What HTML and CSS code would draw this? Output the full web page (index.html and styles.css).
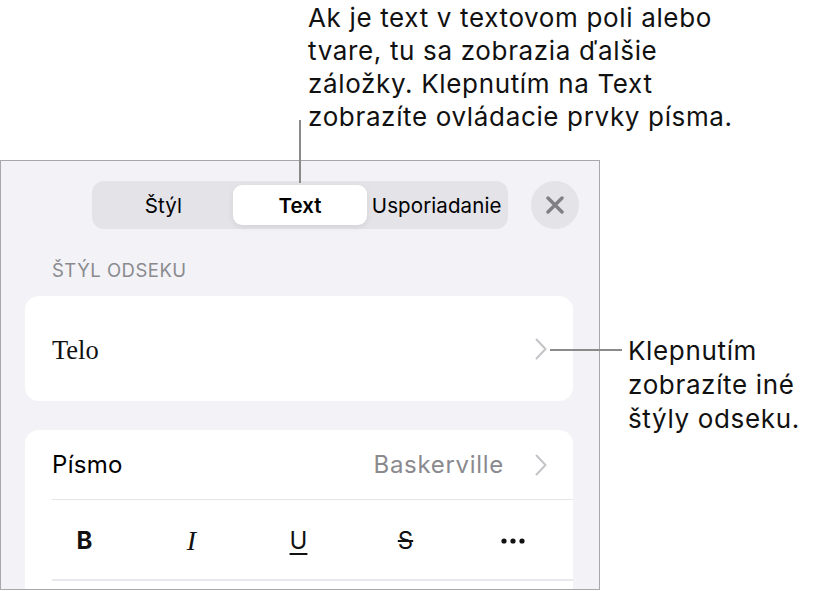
FILE: index.html
```html
<!DOCTYPE html>
<html lang="sk">
<head>
<meta charset="utf-8">
<title>Text</title>
<link rel="stylesheet" href="styles.css">
</head>
<body>
<div class="stage">
  <div class="callout callout-top">Ak je text v textovom poli alebo<br>tvare, tu sa zobrazia ďalšie<br>záložky. Klepnutím na Text<br>zobrazíte ovládacie prvky písma.</div>
  <div class="leader leader-top"></div>
  <div class="panel">
    <div class="header">
      <div class="segmented">
        <div class="seg">Štýl</div>
        <div class="seg seg-active">Text</div>
        <div class="seg">Usporiadanie</div>
      </div>
      <div class="close">
        <svg width="18" height="18" viewBox="0 0 18 18"><path d="M2 2 L16 16 M16 2 L2 16" stroke="#7f7f84" stroke-width="3.4" stroke-linecap="round" fill="none"/></svg>
      </div>
    </div>
    <div class="section-label">ŠTÝL ODSEKU</div>
    <div class="card card-style">
      <span class="telo">Telo</span>
      <svg class="chev" width="12" height="22" viewBox="0 0 12 22"><path d="M1.5 1.5 L10.5 11 L1.5 20.5" stroke="#c4c4c8" stroke-width="2" fill="none" stroke-linecap="round" stroke-linejoin="round"/></svg>
    </div>
    <div class="card card-font">
      <div class="row row-font">
        <span class="row-title">Písmo</span>
        <span class="row-value">Baskerville</span>
        <svg class="chev" width="12" height="22" viewBox="0 0 12 22"><path d="M1.5 1.5 L10.5 11 L1.5 20.5" stroke="#c4c4c8" stroke-width="2" fill="none" stroke-linecap="round" stroke-linejoin="round"/></svg>
      </div>
      <div class="row row-styles">
        <span class="ico ico-b">B</span>
        <span class="ico ico-i">I</span>
        <span class="ico ico-u">U</span>
        <span class="ico ico-s">S</span>
        <span class="ico ico-more"><svg width="24" height="6" viewBox="0 0 24 6"><circle cx="3" cy="3" r="2.6" fill="#111"/><circle cx="12" cy="3" r="2.6" fill="#111"/><circle cx="21" cy="3" r="2.6" fill="#111"/></svg></span>
      </div>
      <div class="row row-next"></div>
    </div>
  </div>
  <div class="leader leader-right"></div>
  <div class="callout callout-right">Klepnutím<br>zobrazíte iné<br>štýly odseku.</div>
</div>
</body>
</html>
```

FILE: styles.css
```css
* { box-sizing: border-box; }
html, body { margin: 0; padding: 0; background: #ffffff; }
body { font-family: Inter, Roboto, "Liberation Sans", sans-serif; color: #000; }

.stage {
  position: relative;
  width: 819px;
  height: 591px;
  overflow: hidden;
  padding-top: 160px;
}

.callout {
  position: absolute;
  font-family: Inter, Roboto, "Liberation Sans", sans-serif;
  font-size: 26px;
  line-height: 33px;
  color: #111;
  letter-spacing: 0.65px;
}
.callout-top { left: 308px; top: 1px; }
.callout-right { left: 628px; top: 334px; line-height: 34px; }

.leader { position: absolute; background: #8a8a8a; }
.leader-top { left: 299px; top: 120px; width: 2px; height: 63px; }
.leader-right { left: 550px; top: 349px; width: 72px; height: 2px; }

.panel {
  width: 600px;
  height: 430px;
  background: #f2f2f7;
  border: 1px solid #a8a8ac;
  overflow: hidden;
}

.header {
  display: flex;
  align-items: center;
  gap: 23px;
  padding: 20px 0 0 91px;
}
.segmented {
  display: flex;
  width: 416px;
  height: 48px;
  padding: 4px;
  border-radius: 12px;
  background: #e3e3e8;
}
.seg {
  flex: 1;
  display: flex;
  align-items: center;
  justify-content: center;
  font-size: 20.5px;
  color: #000;
  border-radius: 9px;
  white-space: nowrap;
  letter-spacing: 0.1px;
}
.seg-active {
  background: #ffffff;
  font-weight: 600;
  margin: 0 2px;
  box-shadow: 0 2px 6px rgba(0,0,0,0.08);
}
.close {
  width: 48px;
  height: 48px;
  border-radius: 50%;
  background: #e3e3e8;
  display: flex;
  align-items: center;
  justify-content: center;
}

.section-label {
  margin: 30px 0 0 51px;
  font-size: 18.5px;
  line-height: 22px;
  color: #8a8a8e;
  letter-spacing: 0.5px;
}

.card {
  margin-left: 24px;
  width: 548px;
  background: #ffffff;
  border-radius: 14px;
}
.card-style {
  margin-top: 15px;
  height: 105px;
  display: flex;
  align-items: center;
  justify-content: space-between;
  padding: 0 26px 0 27px;
}
.telo {
  font-family: "Liberation Serif", "DejaVu Serif", serif;
  font-size: 26.5px;
  color: #111;
  padding-top: 3px;
}

.card-font {
  margin-top: 29px;
  height: 200px;
}
.row { margin-left: 27px; }
.row-font {
  height: 70px;
  display: flex;
  align-items: center;
  padding-right: 26px;
  border-bottom: 1px solid #e6e6ea;
}
.row-title { font-size: 24px; flex: 1; letter-spacing: 0.3px; }
.row-value { font-size: 24px; color: #8a8a8e; margin-right: 31px; letter-spacing: 0.7px; }

.row-styles {
  margin-left: 6px;
  height: 81px;
  display: grid;
  grid-template-columns: repeat(5, 107px);
  align-items: center;
  justify-items: center;
  position: relative;
}
.row-styles::after {
  content: "";
  position: absolute;
  left: 21px;
  right: 0;
  bottom: 0;
  height: 2px;
  background: #e9e9ed;
}
.ico { font-size: 24px; line-height: 1; color: #111; }
.ico-b { font-weight: 700; font-size: 24px; }
.ico-i { font-family: "Liberation Serif", serif; font-style: italic; font-size: 28px; }
.ico-u { text-decoration: underline; text-underline-offset: 4px; text-decoration-thickness: 2px; }
.ico-s { text-decoration: line-through; text-decoration-thickness: 1.5px; }
.ico-more { display: flex; align-items: center; }
.row-next { height: 20px; }
```
